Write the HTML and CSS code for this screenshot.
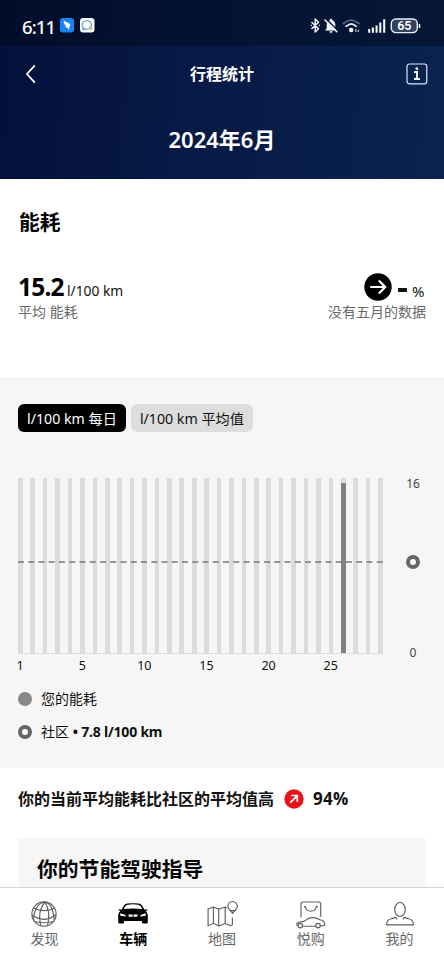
FILE: index.html
```html
<!DOCTYPE html>
<html lang="zh-CN">
<head>
<meta charset="utf-8">
<title>行程统计</title>
<link rel="stylesheet" href="styles.css">
</head>
<body>
<div class="app">
  <header class="hero">
    <div class="status">
      <span class="clock">6:11</span>
      <svg class="app-icon" width="14" height="15" viewBox="0 0 14 15"><rect width="14" height="14.5" rx="3" fill="#1685f5"/><path d="M3.8 2.7 9 5.3Q11 6.3 10 8L8.3 12 7.5 9.4 5.4 9.2 6 7.8Q3.4 6 3.8 2.7Z" fill="#fff"/></svg>
      <svg class="app-icon second" width="15" height="15" viewBox="0 0 15 15"><rect width="14.5" height="14.5" rx="3.3" fill="#f8fbff"/><path d="M10.8 9.2A4.7 4.2 0 1 0 7 11.2L9 11" fill="none" stroke="#5c8fbd" stroke-width="1.1"/><path d="M3.2 9.3 3 12 5.2 10.8" fill="none" stroke="#5c8fbd"/><circle cx="10" cy="9.8" r="1.1" fill="#75b978"/><circle cx="12" cy="10.3" r=".9" fill="#e5a255"/><circle cx="10.7" cy="11.7" r=".9" fill="#e1b34f"/></svg>
      <svg class="system" width="114" height="18" viewBox="0 0 114 18">
        <g fill="none" stroke="#f3f6ff" stroke-width="1.5" stroke-linejoin="round">
          <path d="m1.5 5 7 6.8L5.2 15V2L8.5 5.2 1.5 12M.8 8.5h1M8.8 8.5h1"/>
        </g>
        <path d="M21 1.8q1.3 0 1.3 1.4 3 1.2 3 4.6v3.4l1.3 1.7v.6H15.3v-.6l1.4-1.7V7.8q0-3.4 3-4.6Q19.7 1.8 21 1.8ZM19.2 14.2h3.6Q22.2 16 21 16t-1.8-1.8Z" fill="#f3f6ff"/>
        <path d="m16 1.8 12 12" stroke="#051631" stroke-width="1.4"/><path d="m14.5 2.5 12.8 12.7" stroke="#f3f6ff" stroke-width="1.4"/>
        <g fill="none" stroke-linecap="round"><path d="M33.4 6.5Q41.2 -.3 49 6.5" stroke="#56627a" stroke-width="1.8"/><path d="M36.2 9.3Q41.2 4.7 46.2 9.3" stroke="#dce3ee" stroke-width="1.8"/></g>
        <circle cx="41.2" cy="13" r="2.2" fill="#fff"/><path d="M45.8 12v3M48.3 13v2" stroke="#bdc8da" stroke-width="1.2"/>
        <path d="M59.2 12v3.8M62.9 10.4v5.4M66.6 8.4v7.4M70.3 5.6v10.2M74.2 2.3v13.5" stroke="#f3f6ff" stroke-width="2.1"/>
        <rect x="81.3" y="2" width="26" height="13.6" rx="4.5" fill="#334160" stroke="#e9eefb" stroke-width="1.4"/><path d="M109.5 7v4" stroke="#dfe6f4" stroke-width="1.6"/>
        <text class="battery" x="94.3" y="13.3" text-anchor="middle">65</text>
      </svg>
    </div>
    <div class="titlebar">
      <svg width="11" height="20" viewBox="0 0 11 20"><path d="M9.8 1.4 2 10l7.8 8.6" fill="none" stroke="#fff" stroke-width="1.8"/></svg>
      <h1>行程统计</h1>
      <svg width="22" height="22" viewBox="0 0 22 22"><rect x="1" y="1" width="19.8" height="19.8" rx="2.5" fill="none" stroke="#dbe7fa" stroke-width="1.2"/><path d="M8.2 9h2.8v6.7M8 16h6" fill="none" stroke="#fff" stroke-width="1.8"/><circle cx="10.8" cy="5.7" r="1.4" fill="#fff"/></svg>
    </div>
    <p class="month">2024年6月</p>
  </header>

  <main>
    <section class="summary">
      <h2>能耗</h2>
      <div class="figures">
        <div>
          <p class="reading"><b>15.2</b><span>l/100 km</span></p>
          <p class="note">平均 能耗</p>
        </div>
        <div class="compare">
          <p class="delta"><svg width="28" height="28" viewBox="0 0 28 28"><circle cx="14" cy="14" r="13.7"/><path d="M6.2 14h15M14.8 7.5l6.5 6.5-6.5 6.5" fill="none" stroke="#fff" stroke-width="2.1"/></svg><i class="dash"></i><span>%</span></p>
          <p class="note">没有五月的数据</p>
        </div>
      </div>
    </section>

    <section class="daily">
      <div class="tabs"><span class="tab active">l/100 km 每日</span><span class="tab">l/100 km 平均值</span></div>
      <div class="chart">
        <div class="plot">
          <div class="days">
            <i></i><i></i><i></i><i></i><i></i><i></i><i></i><i></i><i></i><i></i><i></i><i></i><i></i><i></i><i></i><i></i><i></i><i></i><i></i><i></i><i></i><i></i><i></i><i></i><i></i><i></i><i class="used"></i><i></i><i></i><i></i>
          </div>
          <svg class="average" width="365" height="2"><path d="M0 1h365" stroke="#777" stroke-width="1.5" stroke-dasharray="6 4.25"/></svg>
          <div class="ticks"><span>1</span><span>5</span><span>10</span><span>15</span><span>20</span><span>25</span></div>
        </div>
        <div class="scale"><span>16</span><i class="ring"></i><span>0</span></div>
      </div>
      <div class="legend"><i class="dot"></i><span>您的能耗</span></div>
      <div class="legend community"><i class="ring"></i><span>社区 <b>• 7.8 l/100 km</b></span></div>
    </section>

    <section class="result">
      <p>你的当前平均能耗比社区的平均值高</p>
      <svg width="20" height="20" viewBox="0 0 20 20"><circle cx="10" cy="10" r="9.7" fill="#e71419"/><path d="m6.2 13.6 6.9-6.8M7.2 6.5h6.1v6.2" fill="none" stroke="#fff" stroke-width="1.7"/></svg>
      <b>94%</b>
    </section>
    <section class="guide"><h2>你的节能驾驶指导</h2></section>
  </main>

  <nav>
    <a><svg width="32" height="30" viewBox="0 0 32 30" class="line"><circle cx="16" cy="15" r="12.1"/><path d="M17 3Q9 12 12.8 26.6M17 3Q23 13 19.5 26.4M17 3Q25 5 26.2 21M17 3Q6 5 5.7 21.3M5.5 9Q16 14 26.7 9.3M4 15.8Q16 25 28 15.5M6.8 22.5Q16 25 25.3 22.5"/></svg><span>发现</span></a>
    <a class="current"><svg width="32" height="30" viewBox="0 0 32 30"><path d="M4.4 10.8 7 6.4Q8 4.8 10.5 4.5 16 3.8 21.5 4.5q2.5.3 3.5 1.9l2.6 4.4 2.8-.6q.6 1-.6 1.4l-1 .3q1.9 1.8 2 4.4v6.9q0 1.3-1.4 1.3h-3.1q-1.4 0-1.4-1.3v-1.1H7.1v1.1q0 1.3-1.4 1.3H2.6q-1.4 0-1.4-1.3v-6.9q.1-2.6 2-4.4l-1-.3q-1.2-.4-.6-1.4Z"/><path d="m6.6 9.9 1.9-2.8q.8-1.2 2.2-1.4 5.3-.7 10.6 0 1.4.2 2.2 1.4l1.9 2.8Q16 9 6.6 9.9Z" fill="#fff"/><path d="m3 14.3 5.5 1.6v1.5l-5-.6ZM29 14.3l-5.5 1.6v1.5l5-.6ZM11.2 15.5h4.3v2.2h-3.5ZM16.5 15.5h4.3l-.8 2.2h-3.5Z" fill="#fff"/></svg><span>车辆</span></a>
    <a><svg width="32" height="30" viewBox="0 0 32 30" class="line"><path d="M21 8.6 19.2 8l-6.5 2.1V27l6.5-2.5 5.2 2.2M12.7 10.1 7.4 8 2.1 10v16.7l5.5-2.4 5.1 2.7M7.4 8v16.3M19.2 8v16.5M24.4 26.7l2-1V18.8"/><circle cx="26.6" cy="7.2" r="4.7"/><path d="M24.2 11.5 26.6 14.4 29 11.5Z"/></svg><span>地图</span></a>
    <a><svg width="32" height="30" viewBox="0 0 32 30" class="line"><path d="M6 18.2V5.2Q6 3 8.2 3h15.4q2.1 0 2.1 2.2v12.6M10.3 7.5Q11 12.2 15.8 12.2T21.3 7.5M9 8.3l1.5-1.4M22.7 8.3l-1.4-1.4M7.5 27.2h13.3M25.3 27l4.2-.6q.9-5.3-4.8-5.7-5-3.4-11.2-1.3L8.7 22.4 3.5 23.2Q.3 24.7 2.6 27"/><circle cx="5.3" cy="26.6" r="2.3"/><circle cx="23" cy="26.6" r="2.3"/></svg><span>悦购</span></a>
    <a><svg width="32" height="30" viewBox="0 0 32 30" class="line"><ellipse cx="16" cy="10.5" rx="5.3" ry="7"/><path d="M11.2 18.3Q9.5 19.3 7.2 19.8 2.8 20.6 2.6 25.8h26.8Q29.2 20.6 24.8 19.8 22.5 19.3 20.8 18.3M11.2 18.3l2 1.7M20.8 18.3l-2 1.7"/></svg><span>我的</span></a>
  </nav>
</div>
</body>
</html>
```
FILE: styles.css
```css
* { box-sizing: border-box; }
body {
  margin: 0;
  background: #fff;
  color: #111;
  font-family: "Noto Sans", "Noto Sans CJK SC", sans-serif;
}
h1, h2, p { margin: 0; }
i { display: block; }
svg { display: block; flex: none; }
.app { width: 444px; height: 960px; display: flex; flex-direction: column; overflow: hidden; }

.hero {
  flex: none;
  height: 179px;
  color: #fff;
  background: linear-gradient(95deg, #04103a 0%, #071945 40%, #0a234f 100%);
}
.status {
  height: 46px;
  padding: 7px 20px 0 22px;
  display: flex;
  align-items: center;
  background: rgba(0, 8, 20, .4);
}
.clock { width: 37.5px; flex: none; font: 500 18.5px/24px "Noto Sans", sans-serif; letter-spacing: -.9px; }
.app-icon { margin-top: -2px; }
.app-icon.second { margin-left: 6px; }
.system { margin: -1px 0 0 auto; }
.battery { fill: #fff; font: 600 12.5px Roboto, sans-serif; }
.titlebar {
  height: 56px;
  padding: 0 16px 0 25px;
  display: flex;
  align-items: center;
  justify-content: space-between;
}
.titlebar h1 { margin-left: 2px; font-size: 16px; line-height: 24px; font-weight: 700; }
.month { margin-top: 22px; text-align: center; font-size: 22px; line-height: 30px; font-weight: 600; }

main { flex: 1; min-height: 0; overflow: hidden; }
.summary { height: 198px; padding: 28px 18px 0; }
h2 { font-size: 20.8px; line-height: 30px; font-weight: 700; color: #050505; }
.summary h2 { padding-left: 1px; }
.figures { margin-top: 34px; display: flex; justify-content: space-between; }
.reading, .delta { height: 32px; display: flex; align-items: baseline; line-height: 32px; }
.reading b { width: 49px; font-size: 24.5px; letter-spacing: -.8px; color: #000; }
.reading span { font-size: 13.8px; }
.note { font-size: 14px; line-height: 18px; color: #696969; }
.delta { align-items: center; justify-content: flex-end; }
.dash { width: 9px; height: 4px; margin: 5px 4px 0 6px; background: #111; }
.delta span { width: 14px; margin: 8px 0 0 1px; font-size: 15px; }

.daily { height: 391px; padding: 27px 18px 0; background: #f6f6f6; }
.tabs { display: flex; gap: 5px; }
.tab {
  height: 28px;
  padding: 0 9px;
  border-radius: 6px;
  background: #ddd;
  font-size: 14.2px;
  line-height: 29px;
  white-space: nowrap;
}
.tab.active { background: #000; color: #fff; }
.chart { margin-top: 46px; display: flex; }
.plot { flex: none; width: 365px; height: 196px; position: relative; }
.days { height: 176px; display: flex; justify-content: space-between; border-bottom: 1.5px solid #ddd; }
.days i { width: 4.6px; background: #dcdcdc; }
.days .used { border-top: 5px solid #dcdcdc; background: #808080; }
.average { position: absolute; left: 0; top: 83px; }
.ticks { display: flex; padding-top: 2px; margin-left: -29px; }
.ticks span { flex: none; width: 62.15px; text-align: center; font-size: 12.5px; line-height: 20px; }
.scale {
  flex: none;
  width: 60px;
  height: 189px;
  margin-top: -4px;
  display: flex;
  flex-direction: column;
  align-items: center;
  justify-content: space-between;
  font-size: 12px;
  line-height: 20px;
  color: #444;
}
.ring { width: 14px; height: 14px; border: 4px solid #666; border-radius: 50%; background: #fff; }
.scale .ring { margin-top: -13px; }
.legend { display: flex; align-items: center; gap: 9px; height: 24px; margin-top: 13px; font-size: 14px; line-height: 24px; }
.legend.community { margin-top: 9px; }
.legend b { letter-spacing: -.2px; }
.dot { width: 14px; height: 14px; border-radius: 50%; background: #888; }

.result { height: 63px; padding: 0 18px 1px; display: flex; align-items: center; font-size: 16px; line-height: 24px; font-weight: 700; color: #111; }
.result svg { margin: 0 9px 0 10px; }
.result b { font: 700 17px/24px "Open Sans", sans-serif; letter-spacing: .3px; }
.guide { height: 100px; margin: 7px 18px 0; padding: 16px 19px; background: #f6f6f6; }

nav {
  flex: none;
  height: 73px;
  padding-top: 11px;
  display: flex;
  border-top: 1px solid #d5d5d5;
  background: #fff;
}
nav a { flex: 1; display: flex; flex-direction: column; align-items: center; font-size: 14px; line-height: 20px; color: #666; }
nav .current { font-weight: 700; color: #000; }
.line { fill: none; stroke: #5f5f5f; stroke-width: 1.15; }
```
